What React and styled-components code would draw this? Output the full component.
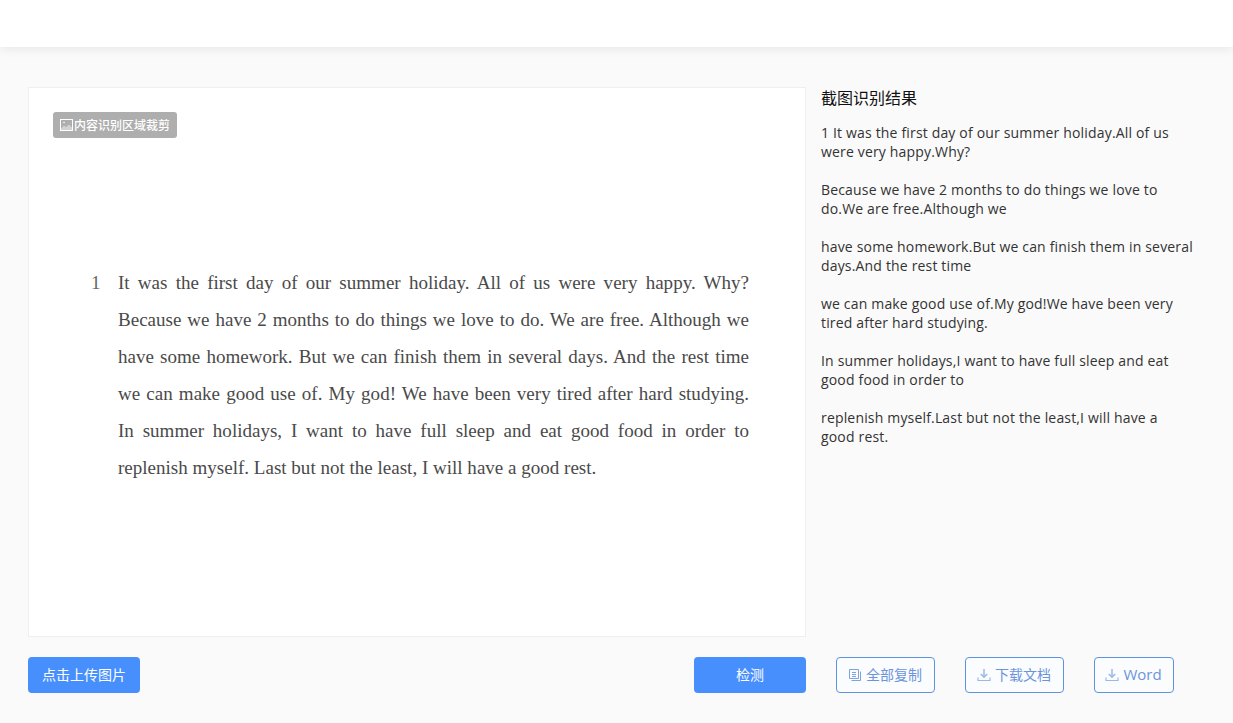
import React from 'react';
import styled, { createGlobalStyle } from 'styled-components';

const GlobalStyle = createGlobalStyle`
  html, body {
    margin: 0;
    padding: 0;
    background: #fafafa;
  }
  body {
    font-family: "Open Sans", "Noto Sans CJK SC", sans-serif;
  }
`;

const Page = styled.div`
  width: 1233px;
  height: 723px;
  overflow: hidden;
  background: #fafafa;
`;

const Header = styled.header`
  height: 47px;
  background: #fff;
  box-shadow: 0 2px 10px rgba(0, 0, 0, 0.08);
`;

const Main = styled.main`
  padding: 40px 0 0 28px;
`;

const Columns = styled.div`
  display: flex;
  gap: 15px;
`;

const ImagePanel = styled.div`
  position: relative;
  box-sizing: border-box;
  width: 778px;
  height: 550px;
  padding: 176px 56px 0 62px;
  background: #fff;
  border: 1px solid #efefef;
`;

const CropBadge = styled.div`
  position: absolute;
  top: 24px;
  left: 24px;
  display: flex;
  align-items: center;
  width: 124px;
  height: 26px;
  box-sizing: border-box;
  padding-left: 7px;
  background: #aeaeae;
  border-radius: 3px;
  color: #fff;
  font-size: 12px;
  font-weight: 500;
`;

const ScanRow = styled.div`
  display: flex;
  height: 37.1px;
  align-items: center;
  font-family: "Liberation Serif", "Times New Roman", serif;
  font-size: 19.05px;
  color: #4a4a4a;
`;

const ScanNumber = styled.span`
  width: 27px;
  flex: none;
  color: #666;
`;

const ScanLine = styled.span`
  flex: 1;
  text-align: justify;
  text-align-last: ${(p) => (p.$last ? 'left' : 'justify')};
`;

const ResultPanel = styled.section`
  width: 374px;
`;

const ResultTitle = styled.h2`
  margin: 0 0 15px;
  padding-top: 1px;
  font-size: 16px;
  line-height: 20px;
  font-weight: 400;
  color: #111;
`;

const ResultText = styled.p`
  margin: 0 0 19px;
  font-size: 14px;
  line-height: 19px;
  letter-spacing: 0.17px;
  color: #333;
`;

const Toolbar = styled.div`
  display: flex;
  align-items: center;
  margin-top: 20px;
  gap: 30px;
`;

const LeftActions = styled.div`
  display: flex;
  justify-content: space-between;
  width: 778px;
`;

const SolidButton = styled.button`
  width: ${(p) => p.$width}px;
  height: 36px;
  padding: 0 0 2px;
  border: none;
  border-radius: 4px;
  background: #478ffc;
  color: #fff;
  font-family: inherit;
  font-size: 14px;
`;

const OutlineButton = styled.button`
  display: flex;
  align-items: center;
  justify-content: center;
  gap: 4px;
  box-sizing: border-box;
  width: ${(p) => p.$width}px;
  height: 36px;
  padding: 0 1px 2px 0;
  border: 1px solid #5b93e0;
  border-radius: 4px;
  background: #fbfcfe;
  color: #6c94dc;
  font-family: inherit;
  font-size: ${(p) => p.$size || 14}px;

  svg {
    margin-top: 2px;
  }
`;

const ImageIcon = () => (
  <svg width="14" height="14" viewBox="0 0 14 14" fill="none" stroke="#fff" strokeWidth="1">
    <rect x="0.5" y="1.5" width="12" height="11" />
    <path d="M1 10.5 L4 7.5 L6 9 L9 6.5 L12 9.5 V12 H1 Z" fill="#fff" fillOpacity="0.45" stroke="none" />
    <circle cx="4" cy="4.5" r="0.8" fill="#fff" stroke="none" />
  </svg>
);

const CopyIcon = () => (
  <svg width="14" height="14" viewBox="0 0 14 14" fill="none" stroke="#7fa3e2" strokeWidth="1">
    <path d="M1.5 1.5 H10.5 V10.5 H1.5 Z" />
    <path d="M12.5 3.5 V12.5 H3.5" />
    <path d="M4 4.5 H8 M4 6.5 H8 M4 8.5 H8" />
  </svg>
);

const DownloadIcon = () => (
  <svg width="14" height="14" viewBox="0 0 14 14" fill="none" stroke="#9bb8e8" strokeWidth="1.5">
    <path d="M7 1 V9 M3.8 6 L7 9.2 L10.2 6" />
    <path d="M1 9.5 V12.5 H13 V9.5" strokeWidth="1.2" />
  </svg>
);

const scanLines = [
  'It was the first day of our summer holiday. All of us were very happy. Why?',
  'Because we have 2 months to do things we love to do. We are free. Although we',
  'have some homework. But we can finish them in several days. And the rest time',
  'we can make good use of. My god! We have been very tired after hard studying.',
  'In summer holidays, I want to have full sleep and eat good food in order to',
  'replenish myself. Last but not the least, I will have a good rest.',
];

const resultLines = [
  ['1 It was the first day of our summer holiday.All of us', 'were very happy.Why?'],
  ['Because we have 2 months to do things we love to', 'do.We are free.Although we'],
  ['have some homework.But we can finish them in several', 'days.And the rest time'],
  ['we can make good use of.My god!We have been very', 'tired after hard studying.'],
  ['In summer holidays,I want to have full sleep and eat', 'good food in order to'],
  ['replenish myself.Last but not the least,I will have a', 'good rest.'],
];

const App = () => {
  return (
    <Page>
      <GlobalStyle />
      <Header />
      <Main>
        <Columns>
          <ImagePanel>
            <CropBadge>
              <ImageIcon />
              内容识别区域裁剪
            </CropBadge>
            {scanLines.map((line, i) => (
              <ScanRow key={line}>
                <ScanNumber>{i === 0 ? '1' : ''}</ScanNumber>
                <ScanLine $last={i === scanLines.length - 1}>{line}</ScanLine>
              </ScanRow>
            ))}
          </ImagePanel>
          <ResultPanel>
            <ResultTitle>截图识别结果</ResultTitle>
            {resultLines.map(([a, b]) => (
              <ResultText key={a}>
                {a}
                <br />
                {b}
              </ResultText>
            ))}
          </ResultPanel>
        </Columns>
        <Toolbar>
          <LeftActions>
            <SolidButton $width={112}>点击上传图片</SolidButton>
            <SolidButton $width={112}>检测</SolidButton>
          </LeftActions>
          <OutlineButton $width={99}>
            <CopyIcon />
            全部复制
          </OutlineButton>
          <OutlineButton $width={99}>
            <DownloadIcon />
            下载文档
          </OutlineButton>
          <OutlineButton $width={80} $size={15}>
            <DownloadIcon />
            Word
          </OutlineButton>
        </Toolbar>
      </Main>
    </Page>
  );
};

export default App;
